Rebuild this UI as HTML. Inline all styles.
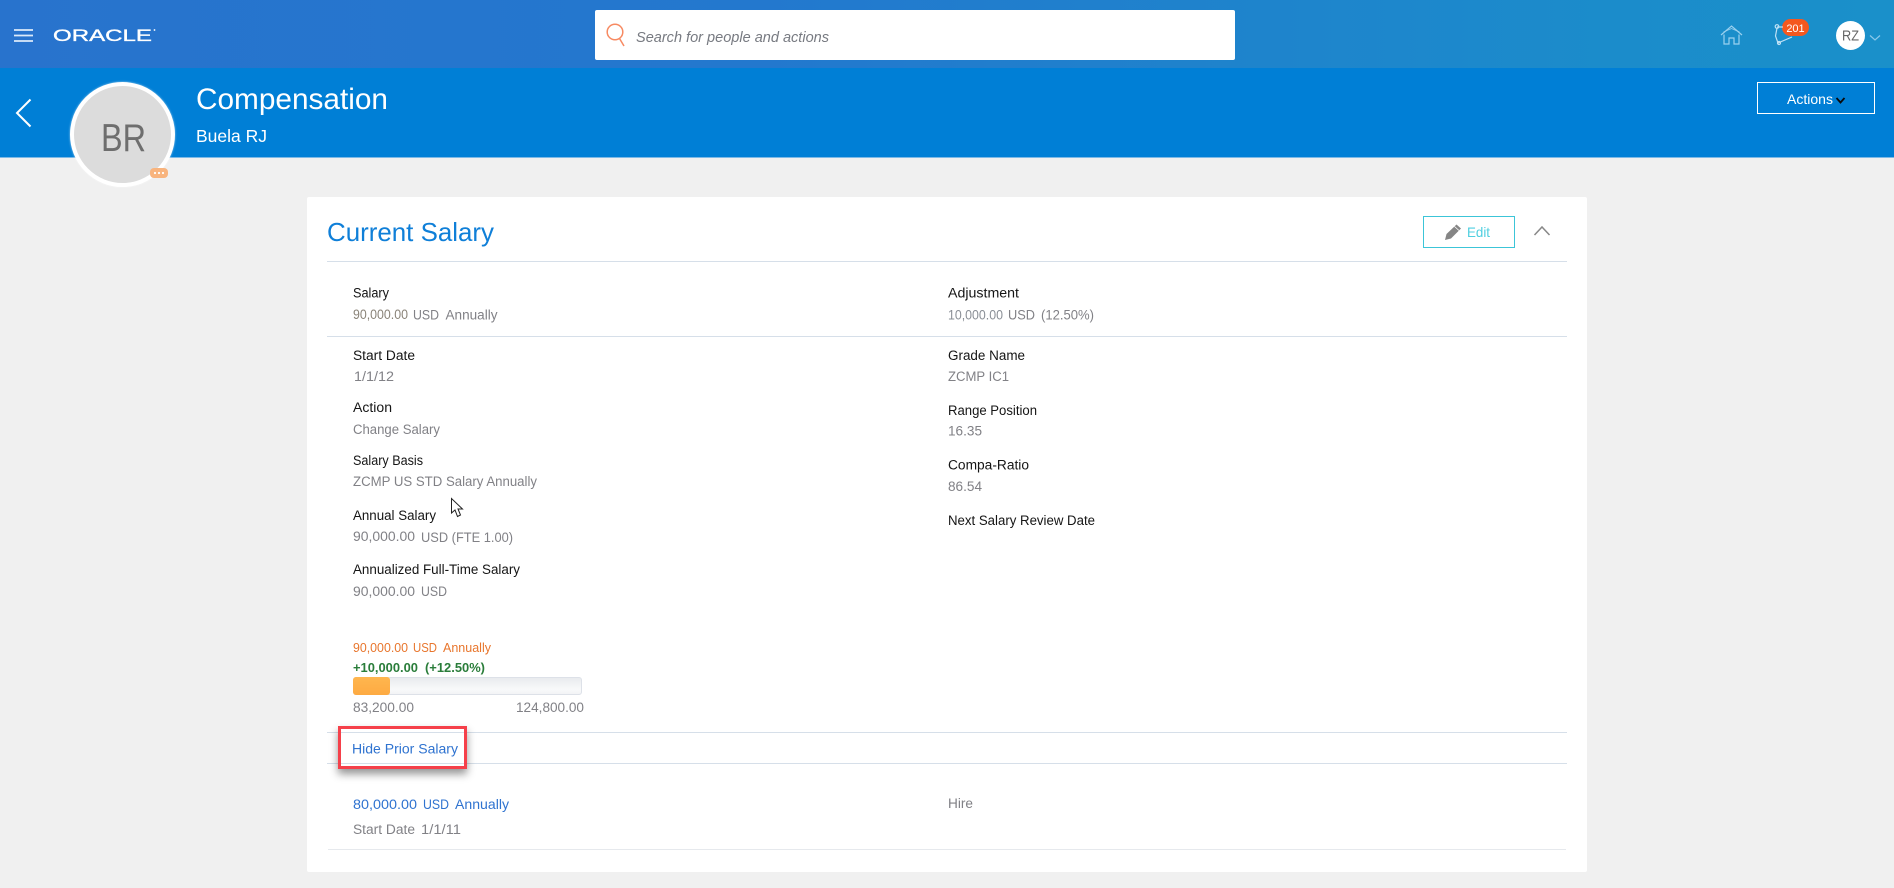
<!DOCTYPE html>
<html lang="en">
<head>
<meta charset="utf-8">
<title>Compensation</title>
<style>
html,body{margin:0;padding:0;width:1894px;height:888px;overflow:hidden;background:#f0f0f0;font-family:"Liberation Sans",sans-serif}
.abs{position:absolute;box-sizing:border-box}
#top{left:0;top:0;width:1894px;height:68px;background:linear-gradient(90deg,#2873cd 0%,#2378ce 40%,#1b8ccb 85%,#1a90ca 100%)}
#sub{left:0;top:68px;width:1894px;height:90px;background:#007fd6;border-bottom:1px solid #7db9e6}
#search{left:595px;top:10px;width:640px;height:50px;background:#fff;border-radius:2px}
#avatar{left:70px;top:82px;width:105px;height:105px;border-radius:50%;background:#dcdcdc;border:4px solid #fff;box-shadow:0 0 2px rgba(255,255,255,.6)}
#dots{left:150px;top:168px;width:18px;height:10px;border-radius:4px;background:#f8b47e}
#rz{left:1836px;top:21px;width:29px;height:29px;border-radius:50%;background:#fff}
#badge{left:1782px;top:19px;width:27px;height:17px;border-radius:9px;background:#f4581f}
#actions{left:1757px;top:82px;width:118px;height:32px;border:1.5px solid #fff}
#card{left:307px;top:197px;width:1280px;height:675px;background:#fff;border-radius:2px}
#edit{left:1423px;top:216px;width:92px;height:32px;border:1.5px solid #3cc5d8}
.ln{height:1px;background:#d6dfe9}
#bar{left:353px;top:677px;width:229px;height:18px;border-radius:3px;border:1px solid #dde1e8;background:linear-gradient(180deg,#e9ebee,#f8f9fa 70%,#f3f4f6)}
#fill{left:353px;top:677px;width:37px;height:18px;border-radius:3px;background:linear-gradient(180deg,#ffb64e,#fdaa42)}
#red{left:338px;top:726px;width:129px;height:43px;border:3px solid #f5404a;box-shadow:0 5px 8px rgba(0,0,0,.42)}
svg{position:absolute;left:0;top:0}
text{font-family:"Liberation Sans",sans-serif}
.l{font-size:13.4px;fill:#151515}
.v{font-size:13.4px;fill:#818186}
</style>
</head>
<body>
<div class="abs" id="top"></div>
<div class="abs" id="sub"></div>
<div class="abs" id="search"></div>
<div class="abs" id="avatar"></div>
<div class="abs" id="dots"></div>
<div class="abs" id="rz"></div>
<div class="abs" id="badge"></div>
<div class="abs" id="actions"></div>
<div class="abs" id="card"></div>
<div class="abs" id="edit"></div>
<div class="abs ln" style="left:327px;top:261px;width:1240px"></div>
<div class="abs ln" style="left:327px;top:336px;width:1240px"></div>
<div class="abs ln" style="left:327px;top:732px;width:1240px"></div>
<div class="abs ln" style="left:327px;top:763px;width:1240px"></div>
<div class="abs ln" style="left:328px;top:849px;width:1238px;background:#e6e9ed"></div>
<div class="abs" id="bar"></div>
<div class="abs" id="fill"></div>
<div class="abs" id="red"></div>

<svg width="1894" height="888" viewBox="0 0 1894 888" xmlns="http://www.w3.org/2000/svg">
  <!-- hamburger -->
  <path d="M14 30H33M14 35.500H33M14 41H33" fill="none" stroke="#dbeafa" stroke-width="1.800"/>
  <!-- logo -->
  <text x="53" y="41" font-size="17" fill="#fff" stroke="#fff" stroke-width=".35" textLength="99" lengthAdjust="spacingAndGlyphs">ORACLE</text>
  <circle cx="154.500" cy="30" r=".9" fill="#fff"/>
  <!-- search -->
  <circle cx="615" cy="32" r="7.800" fill="none" stroke="#f78a62" stroke-width="1.500"/>
  <path d="M619.500 38.500L624 46" stroke="#f78a62" stroke-width="1.500" fill="none"/>
  <text x="636" y="42" font-size="15" font-style="italic" fill="#777a81" textLength="193" lengthAdjust="spacingAndGlyphs">Search for people and actions</text>
  <!-- home -->
  <g fill="none" stroke="#9ad1ef" stroke-width="1.200">
    <path d="M1721 35L1731.500 26L1742 35"/>
    <path d="M1724 34.500V44H1729V38H1734V44H1739V34.500"/>
    <path d="M1723.500 32L1731.500 28.500L1739.500 32" stroke-width=".8"/>
  </g>
  <!-- notifications -->
  <g fill="none" stroke="#bfe1f5" stroke-width="1.200">
    <path d="M1777 27L1783 27M1777 28L1775.500 36L1778 43L1792 37"/>
    <circle cx="1777" cy="26.500" r="1.800"/>
    <circle cx="1779" cy="43" r="1.500"/>
  </g>
  <text x="1795.500" y="32" font-size="11" fill="#fff" text-anchor="middle">201</text>
  <text x="1842" y="40.500" font-size="14.500" fill="#666" textLength="17" lengthAdjust="spacingAndGlyphs">RZ</text>
  <path d="M1870 35.500L1875 40L1880 35.500" fill="none" stroke="#8cc9ea" stroke-width="1.200"/>

  <!-- subheader -->
  <path d="M30.500 99.500L17 113L30.500 126.500" fill="none" stroke="#fff" stroke-width="2"/>
  <text x="196" y="109" font-size="29.500" fill="#fff" textLength="192" lengthAdjust="spacingAndGlyphs">Compensation</text>
  <text x="196" y="142" font-size="17.500" fill="#fff" textLength="71" lengthAdjust="spacingAndGlyphs">Buela RJ</text>
  <text x="101" y="151" font-size="39" fill="#6e6e6e" textLength="45" lengthAdjust="spacingAndGlyphs">BR</text>
  <g fill="#fff"><circle cx="155" cy="173" r="1.100"/><circle cx="159" cy="173" r="1.100"/><circle cx="163" cy="173" r="1.100"/></g>
  <text x="1787" y="104" font-size="14" fill="#fff" textLength="46" lengthAdjust="spacingAndGlyphs">Actions</text>
  <path d="M1836.500 98L1840.500 102.500L1844.500 98" fill="none" stroke="#0a0a0a" stroke-width="1.800"/>

  <!-- card header -->
  <text x="327" y="241" font-size="26" fill="#0f7fd8" textLength="167" lengthAdjust="spacingAndGlyphs">Current Salary</text>
  <path d="M1445 240L1446.500 234L1456.500 224.500L1461 228.500L1451 238.500Z" fill="#858585"/>
  <path d="M1454.500 226.500L1459 230.500" stroke="#fff" stroke-width=".8" fill="none"/>
  <text x="1467" y="237" font-size="14" fill="#4fcfe0" textLength="23" lengthAdjust="spacingAndGlyphs">Edit</text>
  <path d="M1534.500 235L1542 227L1549.500 235" fill="none" stroke="#888" stroke-width="1.500"/>

  <!-- left column -->
  <text class="l" x="353" y="297.500" textLength="36" lengthAdjust="spacingAndGlyphs">Salary</text>
  <text class="v" x="353" y="319" textLength="55" lengthAdjust="spacingAndGlyphs" style="fill:#8a8378">90,000.00</text>
  <text class="v" x="413" y="319.500" textLength="26" lengthAdjust="spacingAndGlyphs">USD</text>
  <text class="v" x="445.500" y="319.500" textLength="52" lengthAdjust="spacingAndGlyphs">Annually</text>

  <text class="l" x="353" y="360" textLength="62" lengthAdjust="spacingAndGlyphs">Start Date</text>
  <text class="v" x="354" y="381" textLength="40" lengthAdjust="spacingAndGlyphs">1/1/12</text>
  <text class="l" x="353" y="412" textLength="39" lengthAdjust="spacingAndGlyphs">Action</text>
  <text class="v" x="353" y="434" textLength="87" lengthAdjust="spacingAndGlyphs">Change Salary</text>
  <text class="l" x="353" y="465" textLength="70" lengthAdjust="spacingAndGlyphs">Salary Basis</text>
  <text class="v" x="353" y="486" textLength="184" lengthAdjust="spacingAndGlyphs">ZCMP US STD Salary Annually</text>
  <text class="l" x="353" y="520" textLength="83" lengthAdjust="spacingAndGlyphs">Annual Salary</text>
  <text class="v" x="353" y="541" textLength="62" lengthAdjust="spacingAndGlyphs">90,000.00</text>
  <text class="v" x="421" y="542" textLength="92" lengthAdjust="spacingAndGlyphs">USD (FTE 1.00)</text>
  <text class="l" x="353" y="574" textLength="167" lengthAdjust="spacingAndGlyphs">Annualized Full-Time Salary</text>
  <text class="v" x="353" y="596" textLength="62" lengthAdjust="spacingAndGlyphs">90,000.00</text>
  <text class="v" x="421" y="596" textLength="26" lengthAdjust="spacingAndGlyphs">USD</text>

  <!-- right column -->
  <text class="l" x="948" y="297.500" textLength="71" lengthAdjust="spacingAndGlyphs">Adjustment</text>
  <text class="v" x="948" y="319.500" textLength="55" lengthAdjust="spacingAndGlyphs" style="fill:#8a8f96">10,000.00</text>
  <text class="v" x="1008" y="319.500" textLength="27" lengthAdjust="spacingAndGlyphs">USD</text>
  <text class="v" x="1041" y="319.500" textLength="53" lengthAdjust="spacingAndGlyphs">(12.50%)</text>
  <text class="l" x="948" y="360" textLength="77" lengthAdjust="spacingAndGlyphs">Grade Name</text>
  <text class="v" x="948" y="381" textLength="61" lengthAdjust="spacingAndGlyphs">ZCMP IC1</text>
  <text class="l" x="948" y="415" textLength="89" lengthAdjust="spacingAndGlyphs">Range Position</text>
  <text class="v" x="948" y="435.500" textLength="34" lengthAdjust="spacingAndGlyphs">16.35</text>
  <text class="l" x="948" y="469.500" textLength="81" lengthAdjust="spacingAndGlyphs">Compa-Ratio</text>
  <text class="v" x="948" y="491" textLength="34" lengthAdjust="spacingAndGlyphs">86.54</text>
  <text class="l" x="948" y="525" textLength="147" lengthAdjust="spacingAndGlyphs">Next Salary Review Date</text>

  <!-- cursor -->
  <path d="M451.500 498.500V513L455 510L457.500 516.500L460.500 515L458 509H462.500Z" fill="#fff" stroke="#222" stroke-width="1"/>

  <!-- range -->
  <text x="353" y="652" font-size="12.500" fill="#e8762d" textLength="55" lengthAdjust="spacingAndGlyphs">90,000.00</text>
  <text x="413" y="652" font-size="12.500" fill="#e8762d" textLength="24" lengthAdjust="spacingAndGlyphs">USD</text>
  <text x="443" y="652" font-size="12.500" fill="#e8762d" textLength="48" lengthAdjust="spacingAndGlyphs">Annually</text>
  <text x="353" y="672" font-size="12.500" font-weight="700" fill="#2a7d3a" textLength="65" lengthAdjust="spacingAndGlyphs">+10,000.00</text>
  <text x="425" y="672" font-size="12.500" font-weight="700" fill="#2a7d3a" textLength="60" lengthAdjust="spacingAndGlyphs">(+12.50%)</text>
  <text class="v" x="353" y="712" textLength="61" lengthAdjust="spacingAndGlyphs">83,200.00</text>
  <text class="v" x="516" y="712" textLength="68" lengthAdjust="spacingAndGlyphs">124,800.00</text>

  <!-- prior -->
  <text x="352" y="753.500" font-size="14" fill="#2f73d0" textLength="106" lengthAdjust="spacingAndGlyphs">Hide Prior Salary</text>
  <text x="353" y="809" font-size="14" fill="#2f73d0" textLength="64" lengthAdjust="spacingAndGlyphs">80,000.00</text>
  <text x="423" y="809" font-size="14" fill="#2f73d0" textLength="26" lengthAdjust="spacingAndGlyphs">USD</text>
  <text x="455" y="809" font-size="14" fill="#2f73d0" textLength="54" lengthAdjust="spacingAndGlyphs">Annually</text>
  <text class="v" x="353" y="834" textLength="62" lengthAdjust="spacingAndGlyphs">Start Date</text>
  <text class="v" x="421" y="834" textLength="40" lengthAdjust="spacingAndGlyphs">1/1/11</text>
  <text class="v" x="948" y="808" textLength="25" lengthAdjust="spacingAndGlyphs">Hire</text>
</svg>
</body>
</html>
